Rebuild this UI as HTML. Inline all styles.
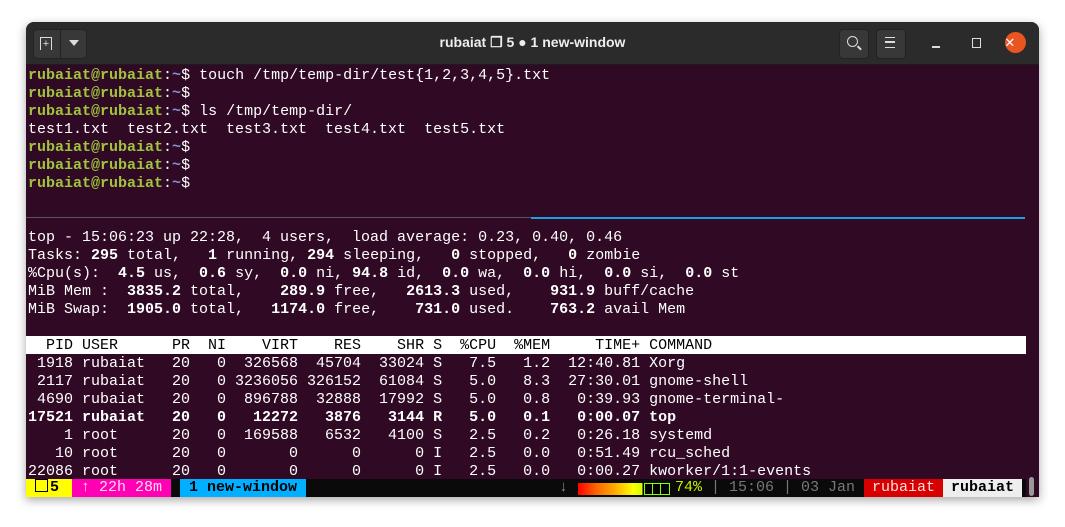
<!DOCTYPE html>
<html><head><meta charset="utf-8"><style>
body{margin:0;width:1065px;height:527px;background:#fff;position:relative;overflow:hidden;font-family:"Liberation Mono",monospace}
.win{position:absolute;left:26px;top:22px;width:1013px;height:475px;background:#300a24;box-shadow:0 3px 10px rgba(0,0,0,.35);border-radius:8px 8px 0 0;overflow:hidden}
.tb{position:absolute;left:0;top:0;width:100%;height:42px;background:#2b2b2b;border-bottom:1px solid #1c1c1c}
.title{position:absolute;left:0;width:100%;top:12px;text-align:center;color:#eee;font:bold 14px "Liberation Sans",sans-serif}
.btn{position:absolute;top:7px;height:28px;background:#383838;border-radius:4px;border:1px solid #222}
pre{margin:0;position:absolute;left:2px;font:15px/18px "Liberation Mono",monospace;color:#fff;white-space:pre}
.g{font-weight:bold;color:#a1c43e}
.p{font-weight:bold;color:#7b96cf}
b{font-weight:bold}
.hdr{position:absolute;left:0;top:314px;width:1000px;height:18px;background:#fff}
.sb{position:absolute;top:457px;height:18px;font:bold 15px/18px "Liberation Mono",monospace}
</style></head><body>
<div class="win">
<div class="tb">
 <div class="btn" style="left:7px;width:52px"></div>
 <div style="position:absolute;left:34px;top:8px;width:1px;height:28px;background:#222"></div>
 <div style="position:absolute;left:14px;top:15px;width:10px;height:12px;border:1px solid #ddd;border-bottom:none;color:#ddd;font:11px/12px sans-serif;text-align:center">+</div>
 <div style="position:absolute;left:43px;top:18px;width:0;height:0;border-left:5px solid transparent;border-right:5px solid transparent;border-top:6px solid #ddd"></div>
 <div class="title">rubaiat ❒ 5 ● 1 new-window</div>
 <div class="btn" style="left:813px;width:28px"></div>
 <div style="position:absolute;left:821px;top:14px;width:9px;height:9px;border:1.5px solid #ddd;border-radius:50%"></div>
 <div style="position:absolute;left:831px;top:25px;width:5px;height:1.5px;background:#ddd;transform:rotate(45deg)"></div>
 <div class="btn" style="left:850px;width:28px"></div>
 <div style="position:absolute;left:859px;top:15px;width:10px;height:9px;border-top:1.5px solid #ddd;border-bottom:1.5px solid #ddd"></div>
 <div style="position:absolute;left:859px;top:19px;width:10px;height:1.5px;background:#ddd"></div>
 <div style="position:absolute;left:906px;top:24px;width:8px;height:1.5px;background:#ddd"></div>
 <div style="position:absolute;left:946px;top:16px;width:7px;height:8px;border:1.5px solid #ddd"></div>
 <div style="position:absolute;left:979px;top:10px;width:21px;height:21px;border-radius:50%;background:#e95420;color:#fff;font:14px/21px "Liberation Sans",sans-serif;text-align:center">✕</div>
</div>
<pre style="top:45px"><span class="g">rubaiat@rubaiat</span>:<span class="p">~</span>$ touch /tmp/temp-dir/test{1,2,3,4,5}.txt
<span class="g">rubaiat@rubaiat</span>:<span class="p">~</span>$
<span class="g">rubaiat@rubaiat</span>:<span class="p">~</span>$ ls /tmp/temp-dir/
test1.txt  test2.txt  test3.txt  test4.txt  test5.txt
<span class="g">rubaiat@rubaiat</span>:<span class="p">~</span>$
<span class="g">rubaiat@rubaiat</span>:<span class="p">~</span>$
<span class="g">rubaiat@rubaiat</span>:<span class="p">~</span>$</pre>
<div style="position:absolute;left:0;top:195px;width:505px;height:1px;background:#555"></div>
<div style="position:absolute;left:505px;top:195px;width:494px;height:1.5px;background:#1a9fe0"></div>
<pre style="top:207px">top - 15:06:23 up 22:28,  4 users,  load average: 0.23, 0.40, 0.46
Tasks: <b>295</b> total,   <b>1</b> running, <b>294</b> sleeping,   <b>0</b> stopped,   <b>0</b> zombie
%Cpu(s):  <b>4.5</b> us,  <b>0.6</b> sy,  <b>0.0</b> ni, <b>94.8</b> id,  <b>0.0</b> wa,  <b>0.0</b> hi,  <b>0.0</b> si,  <b>0.0</b> st
MiB Mem :  <b>3835.2</b> total,    <b>289.9</b> free,   <b>2613.3</b> used,    <b>931.9</b> buff/cache
MiB Swap:  <b>1905.0</b> total,   <b>1174.0</b> free,    <b>731.0</b> used.    <b>763.2</b> avail Mem</pre>
<div class="hdr"></div>
<pre style="top:315px;color:#000">  PID USER      PR  NI    VIRT    RES    SHR S  %CPU  %MEM     TIME+ COMMAND</pre>
<pre style="top:333px"> 1918 rubaiat   20   0  326568  45704  33024 S   7.5   1.2  12:40.81 Xorg
 2117 rubaiat   20   0 3236056 326152  61084 S   5.0   8.3  27:30.01 gnome-shell
 4690 rubaiat   20   0  896788  32888  17992 S   5.0   0.8   0:39.93 gnome-terminal-
<b>17521 rubaiat   20   0   12272   3876   3144 R   5.0   0.1   0:00.07 top</b>
    1 root      20   0  169588   6532   4100 S   2.5   0.2   0:26.18 systemd
   10 root      20   0       0      0      0 I   2.5   0.0   0:51.49 rcu_sched
22086 root      20   0       0      0      0 I   2.5   0.0   0:00.27 kworker/1:1-events</pre>
<div style="position:absolute;left:0;top:457px;width:1000px;height:18px;background:#0a0a0a"></div>
<div class="sb" style="left:0;width:46px;background:#ff0;color:#000"><span style="display:inline-block;width:11px;height:11px;border:1.5px solid #000;margin:0 2px 0 9px;vertical-align:-1px"></span>5</div>
<div class="sb" style="left:46px;width:99px;background:#ff00b4;color:#fde;font-weight:normal">&nbsp;↑ 22h 28m</div>
<div class="sb" style="left:154px;width:126px;background:#00afff;color:#000">&nbsp;1 new-window</div>
<div class="sb" style="left:533px;color:#888;font-weight:normal">↓</div>
<div style="position:absolute;left:552px;top:461px;width:92px;height:12px;background:linear-gradient(90deg,#f00,#f60 20%,#fa0 40%,#ff0 60%,#cf0 70%,#000 70%)"></div>
<div style="position:absolute;left:618px;top:461px;width:24px;height:10px;border:1px solid #8f0"></div>
<div style="position:absolute;left:626px;top:461px;width:1px;height:12px;background:#8f0"></div>
<div style="position:absolute;left:634px;top:461px;width:1px;height:12px;background:#8f0"></div>
<div class="sb" style="left:649px;color:#c8f000;font-weight:normal">74% <span style="color:#777">| 15:06 | 03 Jan</span></div>
<div class="sb" style="left:838px;width:79px;background:#d70000;color:#fdd;font-weight:normal;text-align:center">rubaiat</div>
<div class="sb" style="left:917px;width:79px;background:#eee;color:#000;text-align:center">rubaiat</div>
<div style="position:absolute;left:1003px;top:455px;width:5px;height:19px;background:#999;border-radius:3px"></div>
</div>
</body></html>
